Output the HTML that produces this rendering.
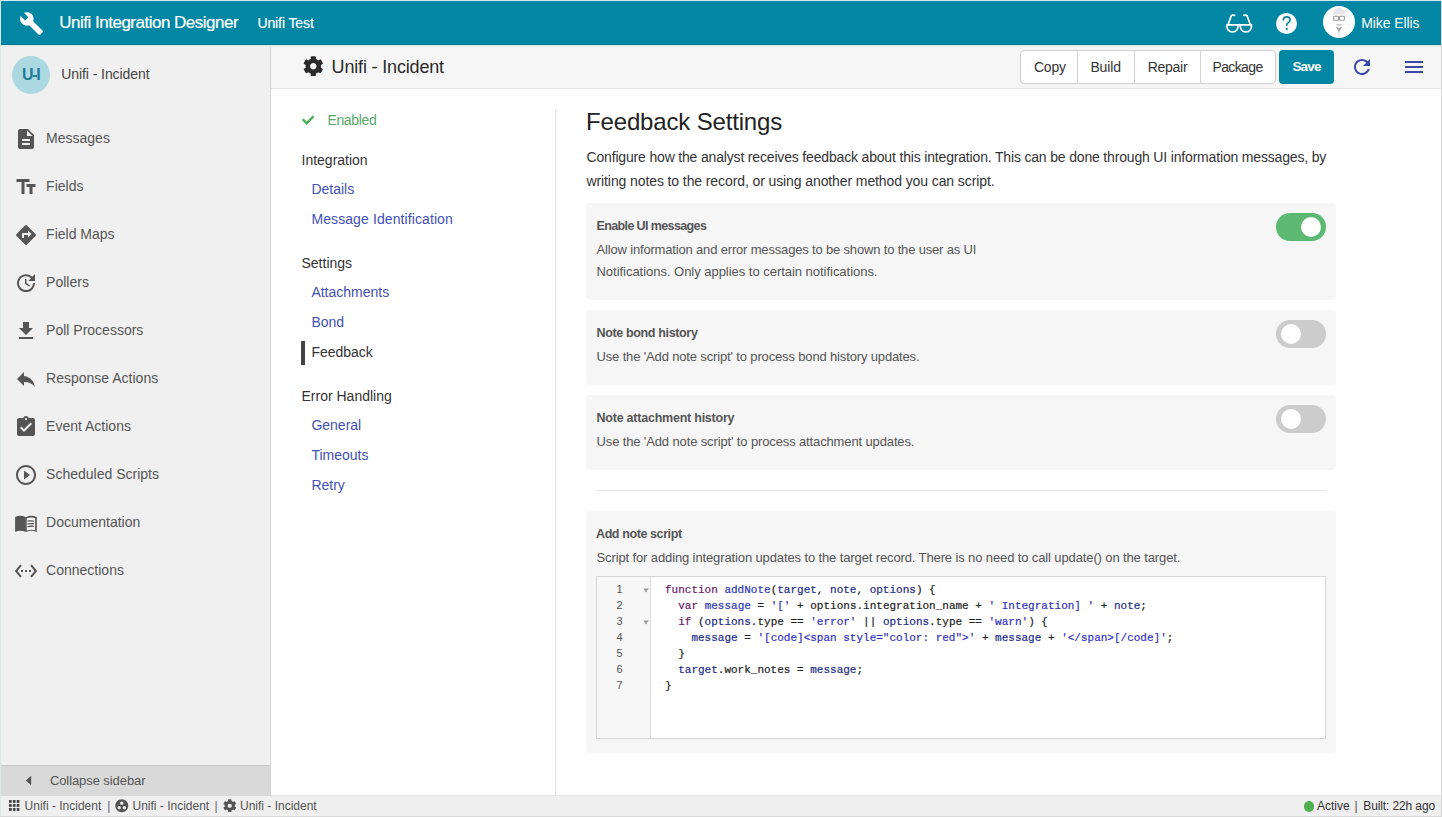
<!DOCTYPE html>
<html><head><meta charset="utf-8">
<style>
*{box-sizing:border-box;margin:0;padding:0}
html,body{width:1442px;height:817px;overflow:hidden;background:#fff;font-family:"Liberation Sans", sans-serif}
.abs{position:absolute}
.t{position:absolute;white-space:nowrap}
.code{white-space:pre;-webkit-text-stroke:0.2px currentColor;font-family:"Liberation Mono", monospace;font-size:11px;line-height:11px;color:#222}
.kw{color:#6a1a66}.def{color:#2a36b0}.v2{color:#1c2a88}.str{color:#3030c0}
</style></head><body>
<div class="abs" style="left:0px;top:0px;width:1442px;height:817px;background:#fff"></div>
<div class="abs" style="left:1px;top:1px;width:1440px;height:44px;background:#0186a3"></div>
<div class="abs" style="left:1px;top:45px;width:270px;height:751px;background:#f0f0f0"></div>
<div class="abs" style="left:270px;top:45px;width:1px;height:751px;background:#d4d4d4"></div>
<div class="abs" style="left:271px;top:45px;width:1170px;height:43px;background:#f6f6f6"></div>
<div class="abs" style="left:271px;top:88px;width:1170px;height:1px;background:#e4e4e4"></div>
<div class="abs" style="left:555px;top:109px;width:1px;height:687px;background:#e3e3e3"></div>
<div class="abs" style="left:1px;top:765px;width:269px;height:1px;background:#c8c8c8"></div>
<div class="abs" style="left:1px;top:766px;width:269px;height:30px;background:#d9d9d9"></div>
<div class="abs" style="left:1px;top:796px;width:1440px;height:20px;background:#efefef"></div>
<div class="abs" style="left:271px;top:795px;width:1170px;height:1px;background:#e6e6e6"></div>
<div class="abs" style="left:1px;top:44px;width:1440px;height:1px;background:#0a7590"></div>
<div class="abs" style="left:1px;top:45px;width:1440px;height:1px;background:#cdeef3"></div>
<div class="abs" style="left:1px;top:46px;width:1440px;height:1px;background:#ececec"></div>
<div class="abs" style="left:0px;top:0px;width:1442px;height:1px;background:#c9eef5"></div>
<div class="abs" style="left:0px;top:0px;width:1px;height:817px;background:#dde6e8"></div>
<div class="abs" style="left:1441px;top:0px;width:1px;height:817px;background:#d6d6d6"></div>
<div class="abs" style="left:0px;top:816px;width:1442px;height:1px;background:#dadada"></div>
<svg class="abs" style="left:19px;top:11px" width="25" height="25" viewBox="0 0 24 24"><path fill="#fff" d="M22.7 19l-9.1-9.1c.9-2.3.4-5-1.5-6.9-2-2-5-2.4-7.4-1.3L9 6 6 9 1.6 4.7C.4 7.1.9 10.1 2.9 12.1c1.9 1.9 4.6 2.4 6.9 1.5l9.1 9.1c.4.4 1 .4 1.4 0l2.3-2.3c.5-.4.5-1.1.1-1.4z"/></svg>
<div class="t" style="left:59.3px;top:13.61px;font-size:17px;line-height:17px;color:#fff;letter-spacing:-0.5px;-webkit-text-stroke:0.2px #fff;">Unifi Integration Designer</div>
<div class="t" style="left:257.4px;top:16.15px;font-size:14px;line-height:14px;color:#fff;letter-spacing:-0.1px;-webkit-text-stroke:0.2px #fff;">Unifi Test</div>
<div class="t" style="left:1361.3px;top:16.15px;font-size:14px;line-height:14px;color:#fff;letter-spacing:-0.1px;">Mike Ellis</div>
<div class="t" style="left:331.6px;top:57.96px;font-size:18px;line-height:18px;color:#2a2a2a;letter-spacing:-0.17px;">Unifi - Incident</div>
<div class="t" style="left:61.2px;top:67.35px;font-size:14px;line-height:14px;color:#444;letter-spacing:-0.07px;">Unifi - Incident</div>
<div class="t" style="left:46.1px;top:130.95px;font-size:14px;line-height:14px;color:#555;">Messages</div>
<div class="t" style="left:46.1px;top:178.95px;font-size:14px;line-height:14px;color:#555;">Fields</div>
<div class="t" style="left:46.1px;top:226.95px;font-size:14px;line-height:14px;color:#555;">Field Maps</div>
<div class="t" style="left:46.1px;top:274.95px;font-size:14px;line-height:14px;color:#555;">Pollers</div>
<div class="t" style="left:46.1px;top:322.95px;font-size:14px;line-height:14px;color:#555;">Poll Processors</div>
<div class="t" style="left:46.1px;top:370.95px;font-size:14px;line-height:14px;color:#555;">Response Actions</div>
<div class="t" style="left:46.1px;top:418.95px;font-size:14px;line-height:14px;color:#555;">Event Actions</div>
<div class="t" style="left:46.1px;top:466.95px;font-size:14px;line-height:14px;color:#555;">Scheduled Scripts</div>
<div class="t" style="left:46.1px;top:514.95px;font-size:14px;line-height:14px;color:#555;">Documentation</div>
<div class="t" style="left:46.1px;top:562.95px;font-size:14px;line-height:14px;color:#555;">Connections</div>
<div class="t" style="left:49.9px;top:774.20px;font-size:13px;line-height:13px;color:#555;letter-spacing:-0.08px;">Collapse sidebar</div>
<div class="t" style="left:327.4px;top:113.15px;font-size:14px;line-height:14px;color:#58a86a;letter-spacing:-0.35px;">Enabled</div>
<div class="t" style="left:301.5px;top:153.45px;font-size:14px;line-height:14px;color:#333;">Integration</div>
<div class="t" style="left:311.4px;top:182.35px;font-size:14px;line-height:14px;color:#3f51b5;">Details</div>
<div class="t" style="left:311.4px;top:212.15px;font-size:14px;line-height:14px;color:#3f51b5;letter-spacing:0.1px;">Message Identification</div>
<div class="t" style="left:301.5px;top:256.45px;font-size:14px;line-height:14px;color:#333;">Settings</div>
<div class="t" style="left:311.4px;top:285.45px;font-size:14px;line-height:14px;color:#3f51b5;">Attachments</div>
<div class="t" style="left:311.4px;top:315.45px;font-size:14px;line-height:14px;color:#3f51b5;">Bond</div>
<div class="t" style="left:311.4px;top:345.45px;font-size:14px;line-height:14px;color:#333;">Feedback</div>
<div class="abs" style="left:301px;top:341px;width:4px;height:24px;background:#444"></div>
<div class="t" style="left:301.5px;top:389.45px;font-size:14px;line-height:14px;color:#333;">Error Handling</div>
<div class="t" style="left:311.4px;top:418.45px;font-size:14px;line-height:14px;color:#3f51b5;">General</div>
<div class="t" style="left:311.4px;top:448.45px;font-size:14px;line-height:14px;color:#3f51b5;">Timeouts</div>
<div class="t" style="left:311.4px;top:478.45px;font-size:14px;line-height:14px;color:#3f51b5;">Retry</div>
<div class="t" style="left:586.1px;top:109.68px;font-size:24px;line-height:24px;color:#222;letter-spacing:-0.17px;">Feedback Settings</div>
<div class="t" style="left:586.5px;top:150.15px;font-size:14px;line-height:14px;color:#333;letter-spacing:-0.17px;">Configure how the analyst receives feedback about this integration. This can be done through UI information messages, by</div>
<div class="t" style="left:586.5px;top:174.15px;font-size:14px;line-height:14px;color:#333;letter-spacing:-0.1px;">writing notes to the record, or using another method you can script.</div>
<div class="abs" style="left:586px;top:203px;width:750px;height:97px;background:#f6f6f6;border-radius:4px"></div>
<div class="abs" style="left:1276px;top:213px;width:50px;height:28px;background:#5cb972;border-radius:14px"></div>
<div class="abs" style="left:1301px;top:217px;width:20px;height:20px;background:#fff;border-radius:50%"></div>
<div class="t" style="left:596.5px;top:219.72px;font-size:12.5px;line-height:12.5px;color:#555;font-weight:bold;letter-spacing:-0.62px;">Enable UI messages</div>
<div class="t" style="left:596.5px;top:243.00px;font-size:13px;line-height:13px;color:#555;letter-spacing:-0.17px;">Allow information and error messages to be shown to the user as UI</div>
<div class="t" style="left:596.5px;top:265.00px;font-size:13px;line-height:13px;color:#555;letter-spacing:-0.03px;">Notifications. Only applies to certain notifications.</div>
<div class="abs" style="left:586px;top:310px;width:750px;height:75px;background:#f6f6f6;border-radius:4px"></div>
<div class="abs" style="left:1276px;top:320px;width:50px;height:28px;background:#cccccc;border-radius:14px"></div>
<div class="abs" style="left:1281px;top:324px;width:20px;height:20px;background:#fff;border-radius:50%"></div>
<div class="t" style="left:596.5px;top:326.72px;font-size:12.5px;line-height:12.5px;color:#555;font-weight:bold;letter-spacing:-0.35px;">Note bond history</div>
<div class="t" style="left:596.5px;top:350.00px;font-size:13px;line-height:13px;color:#555;letter-spacing:-0.15px;">Use the &#x27;Add note script&#x27; to process bond history updates.</div>
<div class="abs" style="left:586px;top:395px;width:750px;height:75px;background:#f6f6f6;border-radius:4px"></div>
<div class="abs" style="left:1276px;top:405px;width:50px;height:28px;background:#cccccc;border-radius:14px"></div>
<div class="abs" style="left:1281px;top:409px;width:20px;height:20px;background:#fff;border-radius:50%"></div>
<div class="t" style="left:596.5px;top:411.72px;font-size:12.5px;line-height:12.5px;color:#555;font-weight:bold;letter-spacing:-0.23px;">Note attachment history</div>
<div class="t" style="left:596.5px;top:435.00px;font-size:13px;line-height:13px;color:#555;letter-spacing:-0.13px;">Use the &#x27;Add note script&#x27; to process attachment updates.</div>
<div class="abs" style="left:596px;top:490px;width:730px;height:1px;background:#e6e6e6"></div>
<div class="abs" style="left:586px;top:511px;width:750px;height:242px;background:#f6f6f6;border-radius:4px"></div>
<div class="t" style="left:596.0px;top:528.12px;font-size:12.5px;line-height:12.5px;color:#555;font-weight:bold;letter-spacing:-0.4px;">Add note script</div>
<div class="t" style="left:596.5px;top:551.00px;font-size:13px;line-height:13px;color:#555;letter-spacing:-0.12px;">Script for adding integration updates to the target record. There is no need to call update() on the target.</div>
<div class="abs" style="left:596px;top:576px;width:730px;height:163px;background:#fff;border:1px solid #d6d6d6"></div>
<div class="abs" style="left:597px;top:577px;width:54px;height:161px;background:#f7f7f7;border-right:1px solid #dddddd"></div>
<svg class="abs" style="left:14px;top:127px" width="24" height="24" viewBox="0 0 24 24"><path fill="#555" d="M14 2H6c-1.1 0-1.99.9-1.99 2L4 20c0 1.1.89 2 1.99 2H18c1.1 0 2-.9 2-2V8l-6-6zm2 16H8v-2h8v2zm0-4H8v-2h8v2zm-3-5V3.5L18.5 9H13z"/></svg>
<svg class="abs" style="left:14px;top:175px" width="24" height="24" viewBox="0 0 24 24"><path fill="#555" d="M2.5 4v3h5v12h3V7h5V4h-13zm19 5h-9v3h3v7h3v-7h3V9z"/></svg>
<svg class="abs" style="left:14px;top:223px" width="24" height="24" viewBox="0 0 24 24"><path fill="#555" d="M21.71 11.29l-9-9c-.39-.39-1.02-.39-1.41 0l-9 9c-.39.39-.39 1.02 0 1.41l9 9c.39.39 1.02.39 1.41 0l9-9c.39-.38.39-1.01 0-1.41zM14 14.5V12h-4v3H8v-4c0-.55.45-1 1-1h5V7.5l3.5 3.5-3.5 3.5z"/></svg>
<svg class="abs" style="left:14px;top:271px" width="24" height="24" viewBox="0 0 24 24"><path fill="#555" d="M21 10.12h-6.78l2.74-2.82c-2.73-2.7-7.15-2.8-9.88-.1-2.73 2.71-2.73 7.08 0 9.79s7.15 2.71 9.88 0C18.32 15.65 19 14.08 19 12.1h2c0 1.98-.88 4.55-2.64 6.29-3.51 3.48-9.21 3.48-12.72 0-3.5-3.47-3.53-9.11-.02-12.58s9.14-3.47 12.65 0L21 3v7.12zM12.5 8v4.25l3.5 2.080-.72 1.21L11 13V8h1.5z"/></svg>
<svg class="abs" style="left:14px;top:319px" width="24" height="24" viewBox="0 0 24 24"><path fill="#555" d="M19 9h-4V3H9v6H5l7 7 7-7zM5 18v2h14v-2H5z"/></svg>
<svg class="abs" style="left:14px;top:367px" width="24" height="24" viewBox="0 0 24 24"><path fill="#555" d="M10 9V5l-7 7 7 7v-4.1c5 0 8.5 1.6 11 5.1-1-5-4-10-11-11z"/></svg>
<svg class="abs" style="left:14px;top:415px" width="24" height="24" viewBox="0 0 24 24"><path fill="#555" d="M19 3h-4.18C14.4 1.84 13.3 1 12 1c-1.3 0-2.4.84-2.82 2H5c-1.1 0-2 .9-2 2v14c0 1.1.9 2 2 2h14c1.1 0 2-.9 2-2V5c0-1.1-.9-2-2-2zm-7 0c.55 0 1 .45 1 1s-.45 1-1 1-1-.45-1-1 .45-1 1-1zm-2 14l-4-4 1.41-1.41L10 14.17l6.59-6.59L18 9l-8 8z"/></svg>
<svg class="abs" style="left:14px;top:463px" width="24" height="24" viewBox="0 0 24 24"><path fill="#555" d="M10 16.5l6-4.5-6-4.5v9zM12 2C6.48 2 2 6.48 2 12s4.48 10 10 10 10-4.48 10-10S17.52 2 12 2zm0 18c-4.41 0-8-3.590-8-8s3.59-8 8-8 8 3.59 8 8-3.59 8-8 8z"/></svg>
<svg class="abs" style="left:14px;top:510px" width="24" height="24" viewBox="0 0 24 24"><path fill="#555" d="M1.1,7 Q6,4.6 11.9,7.3 V22 Q6,19.8 1.1,21.9 Z"/><path fill="#555" d="M11.9,7.3 Q17.5,4.6 22.8,7 V21.9 Q17.5,19.8 11.9,22 Z"/><path fill="#f7f7f7" d="M12.7,8.5 Q17,6.9 21.1,8.2 V20.3 Q17,18.9 12.7,20.6 Z"/><path fill="#555" d="M13.4,10.5 Q16.5,10 19.9,10.4 V11.7 Q16.5,11.3 13.4,11.8Z M13.4,13.2 Q16.5,12.7 19.9,13.1 V14.4 Q16.5,14 13.4,14.5Z M13.4,15.9 Q16.5,15.4 19.9,15.8 V17.1 Q16.5,16.7 13.4,17.2Z"/></svg>
<svg class="abs" style="left:14px;top:559px" width="24" height="24" viewBox="0 0 24 24"><path fill="#555" d="M7.77 6.76L6.23 5.48.82 12l5.41 6.52 1.54-1.28L3.42 12l4.35-5.24zM7 13h2v-2H7v2zm10-2h-2v2h2v-2zm-6 2h2v-2h-2v2zm6.77-7.52l-1.54 1.28L20.58 12l-4.35 5.24 1.54 1.28L23.18 12l-5.41-6.52z"/></svg>
<div class="abs" style="left:12px;top:56px;width:38px;height:38px;background:#acd8e2;border-radius:50%"></div>
<div class="t" style="left:22px;top:66.96px;font-size:16px;line-height:16px;color:#1d7d98;font-weight:bold;letter-spacing:-1.3px;">U-I</div>
<svg class="abs" style="left:302.6px;top:55.5px" width="20.6" height="20.6" viewBox="0 0 512 512"><path fill="#2b2b2b" d="M487.4 315.7l-42.6-24.6c4.3-23.2 4.3-47 0-70.2l42.6-24.6c4.9-2.8 7.1-8.6 5.5-14-11.1-35.6-30-67.8-54.7-94.6-3.8-4.1-10-5.1-14.8-2.3L380.8 110c-17.9-15.4-38.5-27.3-60.8-35.1V25.8c0-5.6-3.9-10.5-9.4-11.7-36.7-8.2-74.3-7.8-109.2 0-5.5 1.2-9.4 6.1-9.4 11.7V75c-22.2 7.9-42.8 19.8-60.8 35.1L88.7 85.5c-4.9-2.8-11-1.9-14.8 2.3-24.7 26.7-43.6 58.9-54.7 94.6-1.7 5.4.6 11.2 5.5 14L67.3 221c-4.3 23.2-4.3 47 0 70.2l-42.6 24.6c-4.9 2.8-7.1 8.6-5.5 14 11.1 35.6 30 67.8 54.7 94.6 3.8 4.1 10 5.1 14.8 2.3l42.6-24.6c17.9 15.4 38.5 27.3 60.8 35.1v49.2c0 5.6 3.9 10.5 9.4 11.7 36.7 8.2 74.3 7.8 109.2 0 5.5-1.2 9.4-6.1 9.4-11.7v-49.2c22.2-7.9 42.8-19.8 60.8-35.1l42.6 24.6c4.9 2.8 11 1.900 14.8-2.3 24.7-26.7 43.6-58.9 54.7-94.6 1.5-5.5-.7-11.3-5.6-14.1zM256 336c-44.1 0-80-35.9-80-80s35.9-80 80-80 80 35.9 80 80-35.9 80-80 80z"/></svg>
<svg class="abs" style="left:301.9px;top:113.9px" width="12.3" height="12.3" viewBox="0 0 512 512"><path fill="#4caf5a" d="M173.898 439.404l-166.4-166.4c-9.997-9.997-9.997-26.206 0-36.204l36.203-36.204c9.997-9.998 26.207-9.998 36.204 0L192 312.69 432.095 72.596c9.997-9.997 26.207-9.997 36.204 0l36.203 36.204c9.997 9.997 9.997 26.206 0 36.204l-294.4 294.401c-9.998 9.997-26.207 9.997-36.204-.001z"/></svg>
<svg class="abs" style="left:1222px;top:10.8px" width="34" height="26" viewBox="0 0 34 26" fill="none" stroke="#fff" stroke-width="1.7" stroke-linecap="round" stroke-linejoin="round"><path d="M5.0,13.8 L16.0,13.8 A5.7,5.7 0 1 1 5.0,13.8 Z"/><path d="M18.4,13.8 L29.4,13.8 A5.7,5.7 0 1 1 18.4,13.8 Z"/><path d="M16,14.2 Q17.2,13.2 18.4,14.2"/><path d="M6.0,13.8 L9.4,4.4 Q10.2,3.9 12.6,4.3"/><path d="M28.4,13.8 L24.9,4.4 Q24.1,3.9 21.7,4.3"/></svg>
<div class="abs" style="left:1276.2px;top:12.8px;width:21px;height:21px;background:#fff;border-radius:50%"></div>
<svg class="abs" style="left:1272px;top:8px" width="30" height="30" viewBox="0 0 30 30"><path d="M11.3,12 Q11.4,8.9 14.7,8.9 Q18.1,8.9 18.1,11.7 Q18.1,13.4 16.3,14.6 Q14.7,15.7 14.7,17.5" fill="none" stroke="#0a7f98" stroke-width="1.6" stroke-linecap="round"/><circle cx="14.7" cy="20.9" r="1.1" fill="#0a7f98"/></svg>
<div class="abs" style="left:1323px;top:6px;width:32px;height:32px;background:#fff;border-radius:50%"></div>
<svg class="abs" style="left:1323px;top:6px" width="32" height="32" viewBox="0 0 32 32"><path d="M10,8.6 Q10,2 16,2 Q22,2 22,8.6 Z" fill="#e6e6e6"/><rect x="10.6" y="10.3" width="5" height="4" rx="0.8" fill="none" stroke="#9a9a9a" stroke-width="1.1"/><rect x="16.4" y="10.3" width="5" height="4" rx="0.8" fill="none" stroke="#9a9a9a" stroke-width="1.1"/><rect x="13.5" y="18" width="5" height="1.8" fill="#cccccc"/><path d="M12.5,20.3 Q16,23 19.5,20.3 L16,26.5 Z" fill="#aaaaaa"/><path d="M16,26 V30" stroke="#e2e2e2" stroke-width="1.5"/></svg>
<div class="abs" style="left:1020px;top:50px;width:256px;height:34px;background:#fff;border:1px solid #cfcfcf;border-radius:4px"></div>
<div class="abs" style="left:1077px;top:51px;width:1px;height:32px;background:#d4d4d4"></div>
<div class="abs" style="left:1134px;top:51px;width:1px;height:32px;background:#d4d4d4"></div>
<div class="abs" style="left:1200px;top:51px;width:1px;height:32px;background:#d4d4d4"></div>
<div class="t" style="left:1033.9px;top:59.75px;font-size:14px;line-height:14px;color:#333;letter-spacing:-0.15px;">Copy</div>
<div class="t" style="left:1090.4px;top:59.75px;font-size:14px;line-height:14px;color:#333;letter-spacing:-0.15px;">Build</div>
<div class="t" style="left:1147.8px;top:59.75px;font-size:14px;line-height:14px;color:#333;letter-spacing:-0.3px;">Repair</div>
<div class="t" style="left:1212.4px;top:59.75px;font-size:14px;line-height:14px;color:#333;letter-spacing:-0.6px;">Package</div>
<div class="abs" style="left:1279px;top:50px;width:55px;height:34px;background:#0186a3;border-radius:4px"></div>
<div class="t" style="left:1292.4px;top:60.17px;font-size:13.5px;line-height:13.5px;color:#fff;font-weight:bold;letter-spacing:-0.8px;">Save</div>
<svg class="abs" style="left:1349.6px;top:54.6px" width="24" height="24" viewBox="0 0 24 24"><path fill="#3a48a8" d="M17.65 6.35C16.2 4.9 14.21 4 12 4c-4.42 0-7.99 3.58-7.99 8s3.57 8 7.99 8c3.73 0 6.84-2.55 7.73-6h-2.08c-.82 2.33-3.04 4-5.65 4-3.31 0-6-2.69-6-6s2.69-6 6-6c1.66 0 3.14.69 4.22 1.78L13 11h7V4l-2.35 2.35z"/></svg>
<svg class="abs" style="left:1401.8px;top:54.8px" width="24" height="24" viewBox="0 0 24 24"><path fill="#3a48a8" d="M3 18h18v-2H3v2zm0-5h18v-2H3v2zm0-7v2h18V6H3z"/></svg>
<svg class="abs" style="left:25px;top:775px" width="7" height="11" viewBox="0 0 7 11"><path d="M6.2,0.8 L6.2,10.2 L0.8,5.5Z" fill="#555"/></svg>
<svg class="abs" style="left:9.3px;top:800px" width="11" height="11" viewBox="0 0 11 11" fill="#454545"><rect x="0" y="0" width="2.7" height="2.9"/><rect x="3.85" y="0" width="2.7" height="2.9"/><rect x="7.7" y="0" width="2.7" height="2.9"/><rect x="0" y="4" width="2.7" height="2.9"/><rect x="3.85" y="4" width="2.7" height="2.9"/><rect x="7.7" y="4" width="2.7" height="2.9"/><rect x="0" y="8" width="2.7" height="2.9"/><rect x="3.85" y="8" width="2.7" height="2.9"/><rect x="7.7" y="8" width="2.7" height="2.9"/></svg>
<div class="t" style="left:24.6px;top:799.84px;font-size:12px;line-height:12px;color:#555;">Unifi - Incident</div>
<div class="t" style="left:107.2px;top:799.84px;font-size:12px;line-height:12px;color:#666;">|</div>
<svg class="abs" style="left:114.3px;top:798.3px" width="15.6" height="15.6" viewBox="0 0 24 24"><path fill="#555" d="M12 2C6.48 2 2 6.48 2 12s4.48 10 10 10 10-4.48 10-10S17.52 2 12 2zM8 17.5c-1.38 0-2.5-1.12-2.5-2.5s1.12-2.5 2.5-2.5 2.5 1.12 2.5 2.5-1.12 2.5-2.5 2.5zM9.5 8c0-1.38 1.12-2.5 2.5-2.5s2.5 1.12 2.5 2.5-1.12 2.5-2.5 2.5S9.5 9.38 9.5 8zm6.5 9.5c-1.38 0-2.5-1.12-2.5-2.5s1.12-2.5 2.5-2.5 2.5 1.12 2.5 2.5-1.12 2.5-2.5 2.5z"/></svg>
<div class="t" style="left:132.5px;top:799.84px;font-size:12px;line-height:12px;color:#555;">Unifi - Incident</div>
<div class="t" style="left:214.5px;top:799.84px;font-size:12px;line-height:12px;color:#666;">|</div>
<svg class="abs" style="left:222.6px;top:798.6px" width="13.5" height="13.5" viewBox="0 0 512 512"><path fill="#555" d="M487.4 315.7l-42.6-24.6c4.3-23.2 4.3-47 0-70.2l42.6-24.6c4.9-2.8 7.1-8.6 5.5-14-11.1-35.6-30-67.8-54.7-94.6-3.8-4.1-10-5.1-14.8-2.3L380.8 110c-17.9-15.4-38.5-27.3-60.8-35.1V25.8c0-5.6-3.9-10.5-9.4-11.7-36.7-8.2-74.3-7.8-109.2 0-5.5 1.2-9.4 6.1-9.4 11.7V75c-22.2 7.9-42.8 19.8-60.8 35.1L88.7 85.5c-4.9-2.8-11-1.9-14.8 2.3-24.7 26.7-43.6 58.9-54.7 94.6-1.7 5.4.6 11.2 5.5 14L67.3 221c-4.3 23.2-4.3 47 0 70.2l-42.6 24.6c-4.9 2.8-7.1 8.6-5.5 14 11.1 35.6 30 67.8 54.7 94.6 3.8 4.1 10 5.1 14.8 2.3l42.6-24.6c17.9 15.4 38.5 27.3 60.8 35.1v49.2c0 5.6 3.9 10.5 9.4 11.7 36.7 8.2 74.3 7.8 109.2 0 5.5-1.2 9.4-6.1 9.4-11.7v-49.2c22.2-7.9 42.8-19.8 60.8-35.1l42.6 24.6c4.9 2.8 11 1.900 14.8-2.3 24.7-26.7 43.6-58.9 54.7-94.6 1.5-5.5-.7-11.3-5.6-14.1zM256 336c-44.1 0-80-35.9-80-80s35.9-80 80-80 80 35.9 80 80-35.9 80-80 80z"/></svg>
<div class="t" style="left:240px;top:799.84px;font-size:12px;line-height:12px;color:#555;">Unifi - Incident</div>
<div class="abs" style="left:1303.5px;top:801px;width:10.5px;height:10.5px;background:#4cb050;border-radius:50%"></div>
<div class="t" style="left:1317px;top:799.84px;font-size:12px;line-height:12px;color:#333;">Active</div>
<div class="t" style="left:1354.5px;top:799.84px;font-size:12px;line-height:12px;color:#555;">|</div>
<div class="t" style="left:1363.3px;top:799.84px;font-size:12px;line-height:12px;color:#333;letter-spacing:-0.12px;">Built: 22h ago</div>
<div class="t" style="left:616.5px;top:583.69px;font-size:11px;line-height:11px;color:#555;font-family:"Liberation Mono", monospace;">1</div>
<div class="t code" style="left:665px;top:584.69px"><span class="kw">function</span> <span class="def">addNote</span>(<span class="v2">target</span>, <span class="v2">note</span>, <span class="v2">options</span>) {</div>
<div class="t" style="left:616.5px;top:599.69px;font-size:11px;line-height:11px;color:#555;font-family:"Liberation Mono", monospace;">2</div>
<div class="t code" style="left:665px;top:600.69px">  <span class="kw">var</span> <span class="def">message</span> = <span class="str">&#x27;[&#x27;</span> + options.integration_name + <span class="str">&#x27; Integration] &#x27;</span> + <span class="v2">note</span>;</div>
<div class="t" style="left:616.5px;top:615.69px;font-size:11px;line-height:11px;color:#555;font-family:"Liberation Mono", monospace;">3</div>
<div class="t code" style="left:665px;top:616.69px">  <span class="kw">if</span> (<span class="v2">options</span>.type == <span class="str">&#x27;error&#x27;</span> || <span class="v2">options</span>.type == <span class="str">&#x27;warn&#x27;</span>) {</div>
<div class="t" style="left:616.5px;top:631.69px;font-size:11px;line-height:11px;color:#555;font-family:"Liberation Mono", monospace;">4</div>
<div class="t code" style="left:665px;top:632.69px">    <span class="v2">message</span> = <span class="str">&#x27;[code]&lt;span style=&quot;color: red&quot;&gt;&#x27;</span> + <span class="v2">message</span> + <span class="str">&#x27;&lt;/span&gt;[/code]&#x27;</span>;</div>
<div class="t" style="left:616.5px;top:647.69px;font-size:11px;line-height:11px;color:#555;font-family:"Liberation Mono", monospace;">5</div>
<div class="t code" style="left:665px;top:648.69px">  }</div>
<div class="t" style="left:616.5px;top:663.69px;font-size:11px;line-height:11px;color:#555;font-family:"Liberation Mono", monospace;">6</div>
<div class="t code" style="left:665px;top:664.69px">  <span class="v2">target</span>.work_notes = <span class="v2">message</span>;</div>
<div class="t" style="left:616.5px;top:679.69px;font-size:11px;line-height:11px;color:#555;font-family:"Liberation Mono", monospace;">7</div>
<div class="t code" style="left:665px;top:680.69px">}</div>
<svg class="abs" style="left:642.5px;top:587.5px" width="6" height="5" viewBox="0 0 6 5"><path d="M0.3,0.5 L5.7,0.5 L3,4.5Z" fill="#999"/></svg>
<svg class="abs" style="left:642.5px;top:619.5px" width="6" height="5" viewBox="0 0 6 5"><path d="M0.3,0.5 L5.7,0.5 L3,4.5Z" fill="#999"/></svg>
</body></html>
